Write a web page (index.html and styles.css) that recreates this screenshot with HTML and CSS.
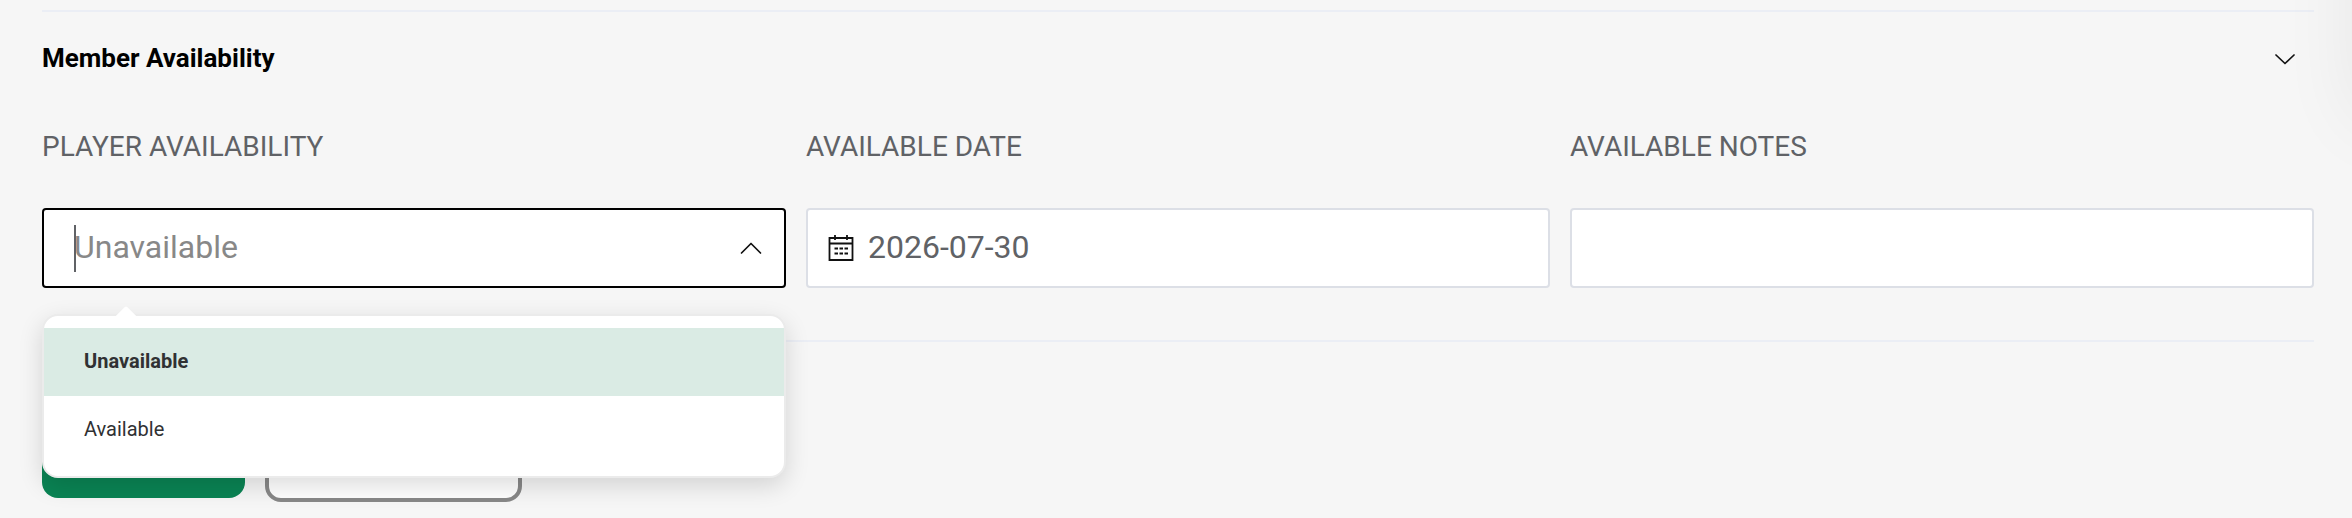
FILE: index.html
```html
<!DOCTYPE html>
<html lang="en">
<head>
<meta charset="utf-8">
<meta name="viewport" content="width=device-width, initial-scale=1">
<title>Member Availability</title>
<link rel="stylesheet" href="styles.css">
</head>
<body>
<main class="page">
  <section class="panel">
    <h2 class="panel-heading">
      <button class="panel-toggle" type="button" aria-expanded="true" aria-controls="availability">
        <span>Member Availability</span>
        <svg class="chevron" viewBox="0 0 24 24" aria-hidden="true"><path d="M2 9L11 17.500L20 9"/></svg>
      </button>
    </h2>
    <div class="fields" id="availability">
      <div class="field">
        <label class="label" for="player-availability">PLAYER AVAILABILITY</label>
        <div class="control control-active">
          <input class="input" id="player-availability" type="text" role="combobox" aria-expanded="true" aria-controls="availability-options" placeholder="Unavailable" readonly>
          <span class="caret"></span>
          <svg class="chevron" viewBox="0 0 24 24" aria-hidden="true"><path d="M3.500 17L13 7.500L22.500 17"/></svg>
          <div class="menu">
            <ul class="options" id="availability-options" role="listbox" aria-label="Player availability">
              <li class="option option-selected" role="option" aria-selected="true">Unavailable</li>
              <li class="option" role="option" aria-selected="false">Available</li>
            </ul>
          </div>
        </div>
      </div>
      <div class="field">
        <label class="label" for="available-date">AVAILABLE DATE</label>
        <div class="control control-date">
          <svg class="calendar" viewBox="0 0 26 26" aria-hidden="true"><path d="M1.500 3H24.500V25H1.500ZM1.500 8.500H24.500M7 0V5M19 0V5"/><path d="M6.500 13.500H10M11.500 13.500H15M16.500 13.500H20M6.500 18.500H10M11.500 18.500H15M16.500 18.500H20"/></svg>
          <input class="input" id="available-date" type="text" value="2026-07-30">
        </div>
      </div>
      <div class="field">
        <label class="label" for="available-notes">AVAILABLE NOTES</label>
        <div class="control">
          <input class="input" id="available-notes" type="text">
        </div>
      </div>
    </div>
  </section>
  <div class="actions">
    <button class="button button-primary" type="button" aria-label="Save"></button>
    <button class="button button-outline" type="button" aria-label="Cancel"></button>
  </div>
</main>
<div class="edge"><div class="edge-shadow"></div></div>
</body>
</html>
```
FILE: styles.css
```css
* {
  box-sizing: border-box;
}

body {
  margin: 0;
  background: #f6f6f6;
  color: #000;
  font-family: Roboto, "Liberation Sans", sans-serif;
}

button,
input {
  font: inherit;
  color: inherit;
}

.page {
  padding: 10px 38px 16px 42px;
}

.panel {
  border-top: 2px solid #ebeef5;
  border-bottom: 2px solid #ebeef5;
  padding-bottom: 52px;
}

.panel-heading {
  margin: 0;
  font-size: 26px;
  line-height: 32px;
}

.panel-toggle {
  display: flex;
  align-items: center;
  justify-content: space-between;
  width: 100%;
  padding: 30px 16px 30px 0;
  border: 0;
  background: none;
  font-weight: 700;
  text-align: left;
}

.chevron {
  flex: none;
  width: 24px;
  height: 24px;
  fill: none;
  stroke: #111;
  stroke-width: 1.7;
  stroke-linecap: round;
  stroke-linejoin: round;
}

.fields {
  display: grid;
  grid-template-columns: repeat(3, 1fr);
  gap: 20px;
}

.field {
  display: flex;
  flex-direction: column;
  gap: 24px;
  min-width: 0;
}

.label {
  padding: 23px 0 17px;
  color: #606266;
  font-size: 28px;
  line-height: 40px;
}

.control {
  position: relative;
  display: flex;
  align-items: center;
  height: 80px;
  padding: 0 22px 0 30px;
  border: 2px solid #dcdfe6;
  border-radius: 4px;
  background: #fff;
  color: #606266;
}

.control-active {
  border-color: #000;
}

.control-date {
  gap: 14px;
  padding-left: 20px;
}

.input {
  flex: 1;
  min-width: 0;
  height: 48px;
  padding: 0 0 2px;
  border: 0;
  outline: 0;
  background: none;
  font-size: 32px;
}

.input::placeholder {
  color: #888;
  opacity: 1;
}

.caret {
  position: absolute;
  top: 15px;
  left: 30px;
  width: 2px;
  height: 47px;
  background: #606266;
}

.calendar {
  flex: none;
  width: 26px;
  height: 26px;
  fill: none;
  stroke: #111;
  stroke-width: 1.8;
}

.menu {
  position: absolute;
  z-index: 2;
  top: 104px;
  right: -2px;
  left: -2px;
  border: 2px solid #ebebeb;
  border-radius: 16px;
  background: #fff;
  box-shadow: 0 8px 24px rgba(0, 0, 0, 0.14);
}

.menu::before {
  content: "";
  position: absolute;
  top: -6px;
  left: 72px;
  width: 20px;
  height: 20px;
  border-radius: 2px;
  background: #fff;
  transform: rotate(45deg);
}

.options {
  position: relative;
  margin: 0;
  padding: 12px 0;
  list-style: none;
}

.option {
  padding: 0 40px 2px;
  color: #303133;
  font-size: 20px;
  line-height: 66px;
}

.option-selected {
  background: #daebe4;
  font-weight: 700;
}

.actions {
  display: flex;
  align-items: center;
  gap: 20px;
  padding-top: 72px;
}

.button {
  border: 0;
  border-radius: 16px;
}

.button-primary {
  width: 203px;
  height: 80px;
  background: #0a8454;
}

.button-outline {
  width: 257px;
  height: 88px;
  border: 4px solid #888;
  background: #fff;
}

.edge {
  position: absolute;
  top: 0;
  right: 0;
  width: 80px;
  height: 220px;
  overflow: hidden;
  pointer-events: none;
}

.edge-shadow {
  position: absolute;
  top: -100px;
  left: 84px;
  width: 80px;
  height: 220px;
  box-shadow: 0 0 80px rgba(0, 0, 0, 0.07);
}
```
